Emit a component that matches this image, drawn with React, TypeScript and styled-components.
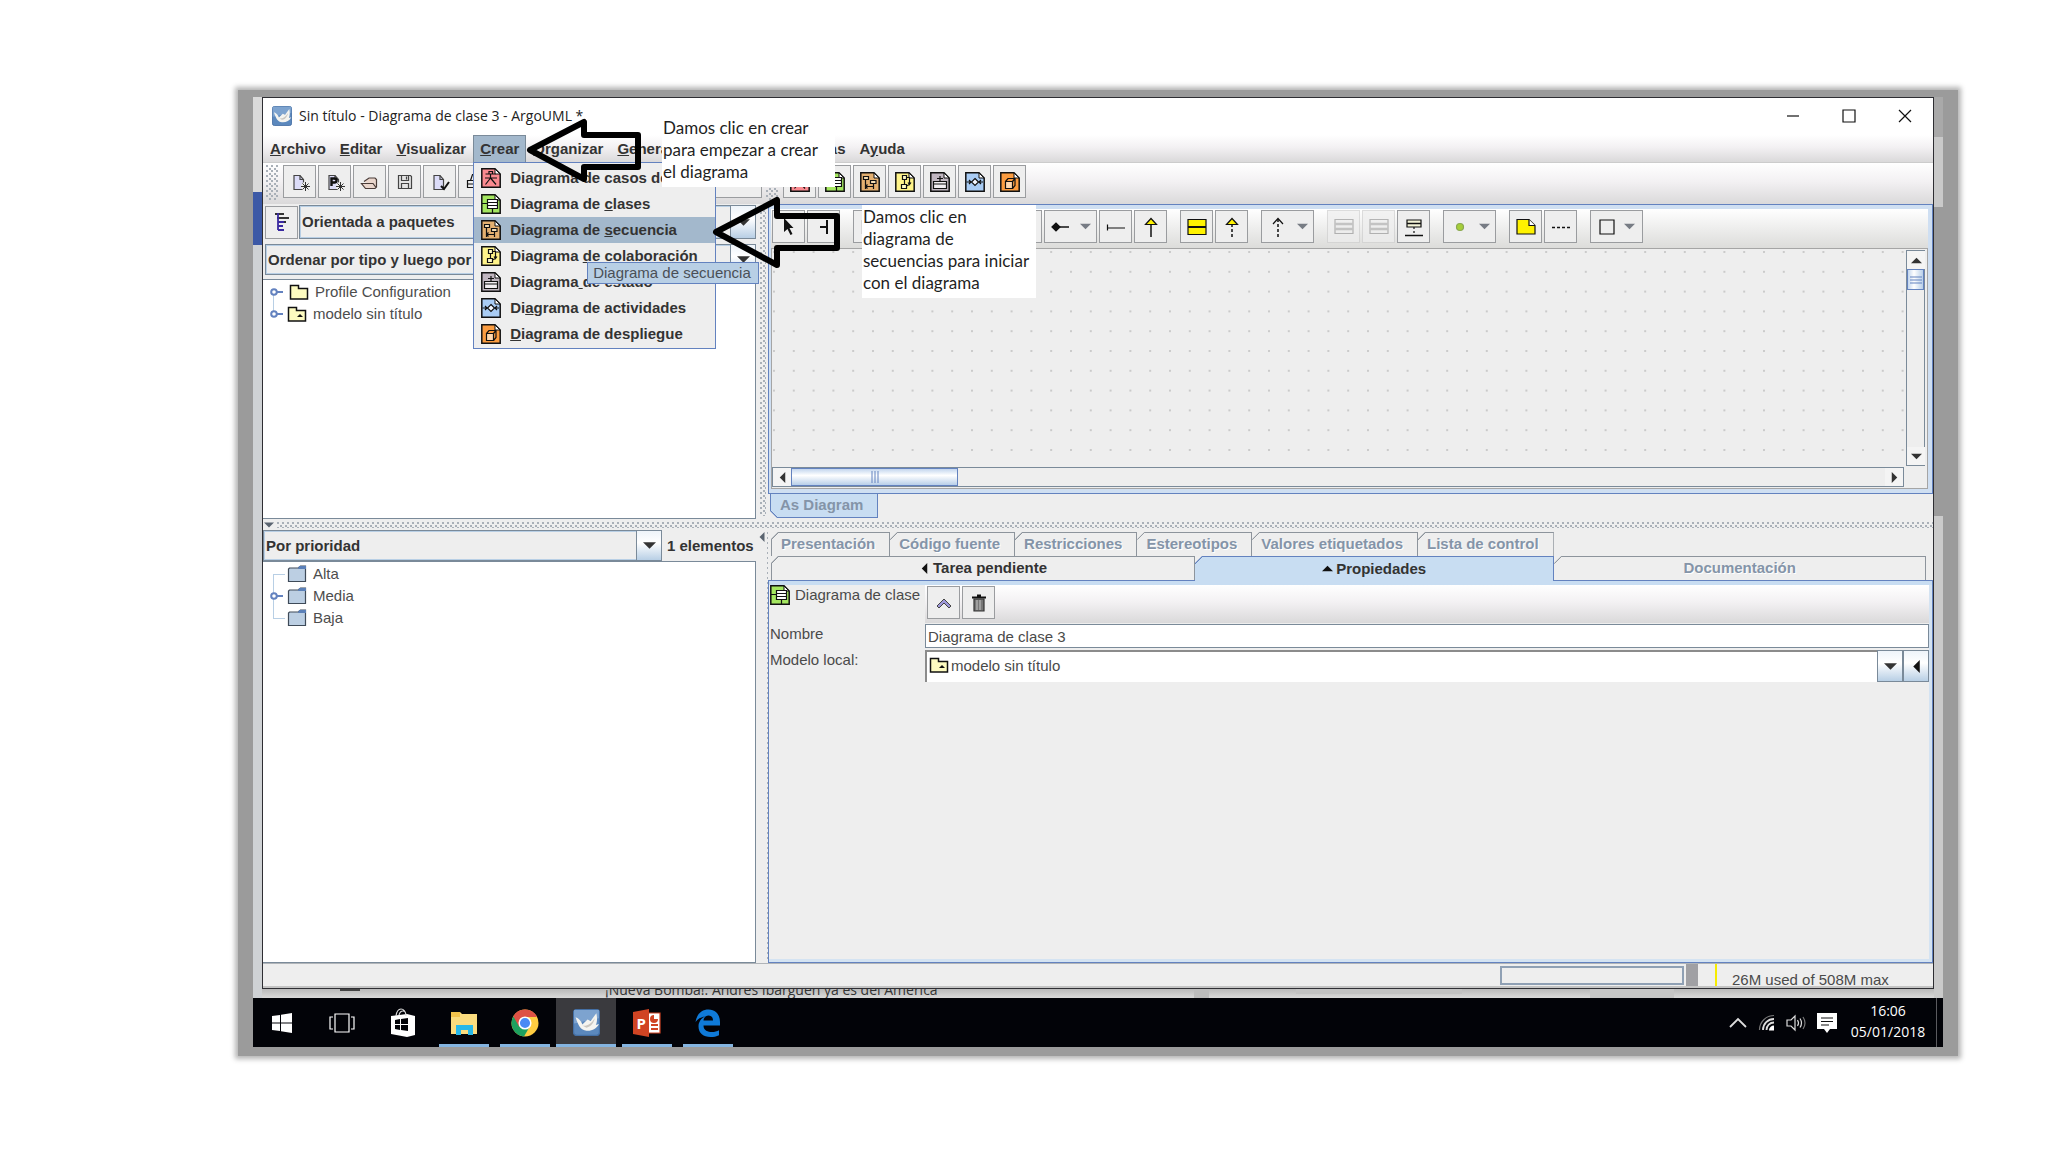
import React from 'react';
import styled, { createGlobalStyle, css } from 'styled-components';

const c = {
  line: '#7a8a99',
  blue: '#6382bf',
  pale: '#c8ddf2',
  menuSel: '#a3b8cc',
  face: '#eeeeee',
  text: '#333333',
  dim: '#8494a8',
};

const Global = createGlobalStyle`
  * { box-sizing: border-box; }
  body { margin: 0; background: #fff; }
  button, select, input { font: inherit; color: inherit; margin: 0; padding: 0; border: 0; background: none; border-radius: 0; outline: 0; }
  ul { list-style: none; margin: 0; padding: 0; }
  svg { display: block; flex: none; }
`;

/* ---------- outer picture frame and desktop ---------- */

const Page = styled.div`
  display: flex;
  height: 100vh;
  min-height: 800px;
  padding: 90px 90px 96px 238px;
  font: 15px/20px 'Liberation Sans', Arial, sans-serif;
  color: ${c.text};
`;
const Frame = styled.div`
  flex: 1;
  min-width: 0;
  display: flex;
  padding: 7px 15px 9px;
  background: #9b9b9b;
  box-shadow: 0 0 5px 3px #b4b4b4;
`;
const Screen = styled.div`
  position: relative;
  flex: 1;
  min-width: 0;
  display: flex;
  flex-direction: column;
`;
const Desktop = styled.div`
  flex: 1;
  min-height: 0;
  display: flex;
  flex-direction: column;
  padding: 0 9px;
  background:
    linear-gradient(#dadada 95px, #3c59a6 95px, #3c59a6 148px, #cfd2d5 148px) left / 9px 100% no-repeat,
    linear-gradient(#a9a9a9 40px, #c9c9c9 40px, #c9c9c9 110px, #9b9b9b 110px, #9b9b9b 419px, #cacaca 419px) right / 9px 100% no-repeat,
    #d3d3d3;
`;
const Behind = styled.div`
  height: 9px;
  overflow: hidden;
  display: flex;
  align-items: flex-end;
  padding-left: 343px;
  font: 14px/16px 'Open Sans', sans-serif;
  color: #333;
  background:
    linear-gradient(#444, #444) 78px 0 / 20px 2px no-repeat,
    linear-gradient(#bcbcbc, #bcbcbc) 932px 0 / 15px 100% no-repeat,
    linear-gradient(#c2c2c2, #c2c2c2) 1034px 0 / 166px 5px no-repeat,
    linear-gradient(#c6c6c6, #c6c6c6) 1328px 0 / 84px 100% no-repeat,
    linear-gradient(#b9b9b9, #dadada);
  white-space: nowrap;
`;

/* ---------- application window ---------- */

const Window = styled.div`
  flex: 1;
  min-height: 0;
  display: flex;
  flex-direction: column;
  border: 1px solid #2e2e33;
  background: ${c.face};
`;
const TitleBar = styled.header`
  height: 37px;
  display: flex;
  align-items: center;
  padding: 0 0 2px 9px;
  background: #fff;
  font: 14px/20px 'Open Sans', sans-serif;
  color: #222;
`;
const Title = styled.h1`
  flex: 1;
  margin: 0 0 0 7px;
  font: inherit;
`;
const WinButton = styled.button`
  width: 56px;
  height: 36px;
  display: flex;
  align-items: center;
  justify-content: center;
`;
const barGradient = css`background: linear-gradient(#ffffff, #f3f1f3 45%, #dad9da);`;
const MenuBar = styled.nav`
  height: 28px;
  display: flex;
  align-items: stretch;
  ${barGradient}
  border-bottom: 1px solid #cccccc;
  font-weight: bold;
`;
const MenuSlot = styled.div`position: relative; display: flex;`;
const MenuButton = styled.button<{ $open?: boolean }>`
  border: ${p => (p.$open ? `1px solid ${c.line}` : '0')};
  border-bottom: 0;
  padding: 0 ${p => (p.$open ? 6 : 7)}px;
  background: ${p => (p.$open ? c.menuSel : 'none')};
  font-weight: bold;
`;
const Menu = styled.ul`
  position: absolute;
  z-index: 5;
  left: 0;
  top: 100%;
  width: 243px;
  padding: 2px 0 1px;
  border: 1px solid ${c.blue};
  background: ${c.face};
`;
const MenuRow = styled.li`position: relative;`;
const MenuItem = styled.button<{ $on?: boolean }>`
  width: 100%;
  height: 26px;
  display: flex;
  align-items: center;
  gap: 9px;
  padding-left: 7px;
  font-weight: bold;
  white-space: nowrap;
  background: ${p => (p.$on ? c.menuSel : 'none')};
`;
const Tip = styled.div`
  position: absolute;
  z-index: 6;
  left: 113px;
  top: 45px;
  height: 22px;
  width: 172px;
  padding: 0 5px;
  line-height: 20px;
  border: 1px solid ${c.blue};
  background: #b8cfe5;
  font-weight: normal;
  white-space: nowrap;
  color: #4a4f57;
`;

const Toolbar = styled.div<{ $h: number }>`
  height: ${p => p.$h}px;
  display: flex;
  align-items: flex-start;
  gap: 4px;
  padding: 2px 3px;
  ${barGradient}
`;
const ToolGroup = styled.div`display: flex; gap: 2px;`;
const Tool = styled.button<{ $wide?: boolean; $off?: boolean }>`
  width: ${p => (p.$wide ? 53 : 33)}px;
  height: 33px;
  display: flex;
  align-items: center;
  justify-content: center;
  gap: 9px;
  border: 1px solid ${p => (p.$off ? '#cfcfcf' : '#9a9c9f')};
  background: ${c.face};
  opacity: ${p => (p.$off ? 0.7 : 1)};
`;
const dots = css`
  background-image: radial-gradient(circle at 1px 1px, #a9b0b8 1px, transparent 1px), radial-gradient(circle at 1px 1px, #a9b0b8 1px, transparent 1px);
  background-size: 5px 5px;
  background-position: 0 0, 3px 3px;
`;
const Grip = styled.div`width: 13px; height: 35px; ${dots}`;

/* ---------- split panes ---------- */

const Panes = styled.main`
  flex: 1;
  min-height: 0;
  display: grid;
  grid-template-columns: 494fr 11px 1165fr;
  grid-template-rows: 315fr 11px 433fr;
`;
const Pane = styled.section`
  min-width: 0;
  min-height: 0;
  display: flex;
  flex-direction: column;
`;
const VSplit = styled.div`
  display: flex;
  justify-content: center;
  padding: 3px 1px;
  &::after { content: ''; width: 6px; height: 100%; ${dots} }
`;
const VSplitArrow = styled(VSplit)`
  justify-content: flex-start;
  padding: 2px 0;
`;
const HSplit = styled.div`
  grid-column: 1 / -1;
  display: flex;
  align-items: center;
  gap: 3px;
  padding-left: 1px;
  &::after { content: ''; flex: 1; height: 6px; ${dots} }
`;

const Row = styled.div<{ $pad?: string }>`
  display: flex;
  align-items: center;
  gap: 1px;
  padding: ${p => p.$pad || '0'};
`;
const ComboBox = styled.div<{ $h: number }>`
  flex: 1;
  min-width: 0;
  height: ${p => p.$h}px;
  display: flex;
  border: 1px solid ${c.line};
  background: ${c.face};
  box-shadow: inset 0 0 0 1px #b8cfe5;
`;
const Select = styled.select`
  flex: 1;
  min-width: 0;
  appearance: none;
  padding: 0 2px;
  font-weight: bold;
`;
const ArrowFace = styled.span`
  width: 25px;
  display: flex;
  align-items: center;
  justify-content: center;
  border-left: 1px solid ${c.line};
  background: linear-gradient(#eef4fa, #ffffff 40%, #b8cfe5);
`;
const Tree = styled.ul<{ $top: number }>`
  flex: 1;
  min-height: 0;
  margin: ${p => p.$top}px 1px 0 0;
  padding: 1px 0 0 6px;
  border: 1px solid ${c.line};
  border-left: 0;
  background: #fff;
`;
const TreeRow = styled.li`
  height: 22px;
  display: flex;
  align-items: center;
`;
const TreeLabel = styled.button<{ $in?: boolean }>`
  display: flex;
  align-items: center;
  gap: 6px;
  padding-left: ${p => (p.$in ? 2 : 0)}px;
  color: #4d4d4d;
`;
const Count = styled.span`
  width: 94px;
  padding-left: 4px;
  font-weight: bold;
`;

/* ---------- diagram editor ---------- */

const Editor = styled.div`
  flex: 1;
  min-height: 0;
  display: flex;
  flex-direction: column;
  border: 1px solid ${c.blue};
  box-shadow: inset 0 0 0 4px #cfdff2;
  padding: 4px 4px 4px 2px;
`;
const DrawBar = styled.div`
  height: 39px;
  display: flex;
  align-items: flex-start;
  gap: 13px;
  padding: 1px;
  background: linear-gradient(#ffffff, #dcdcda);
`;
const Scroll = styled.div`
  flex: 1;
  min-height: 0;
  display: grid;
  grid-template-columns: 1fr 19px;
  grid-template-rows: 1fr 20px;
  gap: 1px 2px;
  padding: 1px 2px 1px 0;
  border: 1px solid #a5a5a5;
  background: ${c.face};
`;
const Canvas = styled.div`overflow: hidden; min-height: 0;`;
const Track = styled.div<{ $v?: boolean }>`
  display: flex;
  flex-direction: ${p => (p.$v ? 'column' : 'row')};
  border: 1px solid ${c.line};
  background: ${c.face};
  min-height: 0;
`;
const TrackEnd = styled.button`
  width: 18px;
  height: 18px;
  display: flex;
  align-items: center;
  justify-content: center;
  background: #f4f4f4;
`;
const Thumb = styled.div<{ $v?: boolean }>`
  width: ${p => (p.$v ? 'auto' : '167px')};
  height: ${p => (p.$v ? '21px' : 'auto')};
  display: flex;
  align-items: center;
  justify-content: center;
  border: 1px solid ${c.blue};
  background: linear-gradient(${p => (p.$v ? '90deg, ' : '')}#c3d6ee, #ffffff 40%, #b8cfe9);
`;
const Fill = styled.div`flex: 1;`;
const ViewTabs = styled.div`
  height: 25px;
  padding-left: 2px;
  display: flex;
  align-items: flex-start;
`;
const ViewTab = styled.button`
  height: 24px;
  padding: 0 14px 2px 9px;
  border: 1px solid ${c.blue};
  border-top: 0;
  font-weight: bold;
  color: ${c.dim};
  clip-path: polygon(0 0, 100% 0, 100% 100%, 7px 100%, 0 calc(100% - 7px));
  background: linear-gradient(45deg, ${c.blue} 6px, ${c.pale} 6px) border-box;
`;

/* ---------- details panel ---------- */

const TabArea = styled.div`padding: 2px 7px 0 3px;`;
const Tabs = styled.div`
  display: flex;
  height: 24px;
`;
const Tab = styled.button<{ $on?: boolean; $live?: boolean; $grow?: number }>`
  flex: ${p => (p.$grow ? `${p.$grow} 1 0` : 'none')};
  min-width: 0;
  height: ${p => (p.$on ? 25 : 24)}px;
  padding: 0 ${p => (p.$grow ? 9 : 14)}px 1px 9px;
  display: flex;
  align-items: center;
  justify-content: center;
  gap: 3px;
  border: 1px solid ${p => (p.$on ? c.blue : '#8d949c')};
  border-bottom: 0;
  font-weight: bold;
  line-height: 22px;
  white-space: nowrap;
  color: ${p => (p.$live ? c.text : c.dim)};
  text-shadow: ${p => (p.$live ? 'none' : '1px 1px #fff')};
  clip-path: polygon(7px 0, 100% 0, 100% 100%, 0 100%, 0 7px);
  background: linear-gradient(135deg, ${p => (p.$on ? c.blue : '#8d949c')} 6px, ${p => (p.$on ? c.pale : c.face)} 6px) border-box;
  & + & { border-left-width: 0; }
`;
const Details = styled.form`
  flex: 1;
  min-height: 0;
  display: grid;
  grid-template-columns: 155px 1fr;
  grid-template-rows: 38px 25px 32px 1fr;
  row-gap: 1px;
  padding: 4px 3px 4px 1px;
  border: 1px solid ${c.blue};
  box-shadow: inset 0 4px ${c.pale}, inset -3px 0 #d4e3f2, inset 0 -3px #d4e3f2;
`;
const Label = styled.label`
  display: flex;
  align-items: flex-start;
  gap: 5px;
  color: #4a4a4a;
  white-space: nowrap;
`;
const ActionBar = styled.div`
  display: flex;
  gap: 2px;
  padding: 1px 2px;
  ${barGradient}
`;
const TextInput = styled.input`
  min-width: 0;
  height: 24px;
  padding: 0 2px;
  border: 1px solid ${c.line};
  background: #fff;
  color: #4a4a4a;
`;
const ModelField = styled.div`
  display: flex;
  align-items: stretch;
  border-top: 2px solid #8b8b8b;
  border-left: 2px solid #8b8b8b;
  background: #fff;
`;
const ModelSelect = styled(Select)`
  padding: 0 2px 2px;
  font-weight: normal;
  color: #4a4a4a;
`;
const ModelIcon = styled.span`padding: 4px 0 0 2px;`;
const FieldArrow = styled.button`
  width: 26px;
  margin-top: -2px;
  display: flex;
  align-items: center;
  justify-content: center;
  border: 1px solid ${c.line};
  background: linear-gradient(#eef4fa, #ffffff 40%, #b8cfe5);
`;

const StatusBar = styled.footer`
  height: 25px;
  display: flex;
  align-items: stretch;
  border-top: 1px solid #b0b4b8;
  border-bottom: 2px solid #c4c4c4;
`;
const Progress = styled.div`
  width: 184px;
  margin: 2px 2px 1px 0;
  border: 2px solid #8fa0b4;
`;
const Divider = styled.div`width: 12px; background: #a0a0a4;`;
const Memory = styled.div`
  width: 218px;
  margin-left: 17px;
  padding: 6px 0 0 15px;
  border-left: 2px solid #f6ec00;
  line-height: 20px;
  white-space: nowrap;
  color: #4a4a4a;
`;

/* ---------- taskbar ---------- */

const Taskbar = styled.div`
  height: 49px;
  display: flex;
  align-items: stretch;
  gap: 1px;
  background: #020308;
  color: #fff;
`;
const Task = styled.button<{ $run?: boolean; $active?: boolean; $first?: boolean }>`
  width: ${p => (p.$first ? 58 : 60)}px;
  display: flex;
  align-items: center;
  justify-content: center;
  background:
    linear-gradient(#84b4e0, #84b4e0) bottom / ${p => (p.$run ? (p.$active ? '60px 3px' : '50px 3px') : '0 0')} no-repeat,
    ${p => (p.$active ? '#3a3a3e' : 'transparent')};
`;
const Tray = styled.div`
  margin-left: auto;
  display: flex;
  align-items: center;
  gap: 11px;
`;
const Clock = styled.time`
  width: 76px;
  margin-left: 2px;
  padding-bottom: 3px;
  text-align: center;
  font: 14px/21px 'Open Sans', sans-serif;
`;
const ShowDesktop = styled.button`
  width: 7px;
  height: 49px;
  margin-left: -1px;
  border-left: 1px solid #5a5a5e;
`;

/* ---------- tutorial annotations ---------- */

const Note = styled.p<{ $x: number; $y: number; $w: number }>`
  position: absolute;
  z-index: 8;
  left: ${p => p.$x}px;
  top: ${p => p.$y}px;
  width: ${p => p.$w}px;
  margin: 0;
  padding: 1px 0 4px 1px;
  background: #fff;
  color: #1f1f1f;
  font: 17px/22px Lato, sans-serif;
  white-space: pre-line;
`;
const Pointer = styled.svg<{ $x: number; $y: number }>`
  position: absolute;
  z-index: 7;
  left: ${p => p.$x}px;
  top: ${p => p.$y}px;
  pointer-events: none;
`;

/* ---------- icons ---------- */

const S = (p: { w?: number; h?: number; vb?: string; children: React.ReactNode }) => (
  <svg width={p.w ?? 20} height={p.h ?? 20} viewBox={p.vb ?? `0 0 ${p.w ?? 20} ${p.h ?? 20}`} fill="none" stroke="#111" strokeWidth="1.2" aria-hidden="true">
    {p.children}
  </svg>
);

type Kind = 'use' | 'cls' | 'seq' | 'col' | 'sta' | 'act' | 'dep';
const paper: Record<Kind, string> = {
  use: '#fa8a90', cls: '#a4e660', seq: '#e4b070', col: '#fff48a', sta: '#c0b6c0', act: '#a9ccf4', dep: '#fb9c40',
};
const inner: Record<Kind, React.ReactNode> = {
  use: <path d="M4.500 6h10M9.500 6v4M4 10h12M9.500 10l-5 6.500M9.500 10l5.500 6.500M8 3.500h3.500V6H8z" />,
  cls: <><path d="M6.500 5.500h10v9h-10z" fill="#fff" /><path d="M6.500 8.500h10M6.500 11.500h10M1 9.500h5.500M11.500 14.500V19" /></>,
  seq: <><path d="M3.500 4.500h5v3h-5z" fill="#f6deb4" /><path d="M10.500 8.500h5.500v3h-5.500z" fill="#f6deb4" /><path d="M5.500 7.500V17M13.500 11.500V17M5.500 14.500h8M7.500 12.500l-2 2 2 2" /></>,
  col: <><path d="M7.500 3.500h4v4h-4zM6.500 12.500h5v4h-5z" fill="#fffcc8" /><path d="M9.500 7.500v5M11.500 5.500h3v7l-3 1.500M13 10.500l1.500 2 1.500-2" /></>,
  sta: <><path d="M3.500 9.500h13v7h-13z" fill="#f3eff3" /><path d="M3.500 12h13M10 4v5.500M7 6.500h6" /></>,
  act: <><path d="M10 6.500l3.500 3.500-3.500 3.500L6.500 10z" fill="#f4f8ff" /><path d="M1.500 10h5M13.500 10H18M4 8l2 2-2 2M16 8l-2 2 2 2" /></>,
  dep: <><path d="M5.500 9.500h7v7h-7z" fill="#ffd9b0" /><path d="M5.500 9.500l2.500-3h7v7l-2.500 3M12.500 9.500l2.500-3" /></>,
};
const DiagramIcon = ({ kind }: { kind: Kind }) => (
  <S>
    <path d="M0.800 0.800h13.200l5.200 5.200v13.200H0.800z" fill={paper[kind]} strokeWidth="1.500" />
    <path d="M14 1v5h5z" fill="#fff" strokeWidth="1" />
    {inner[kind]}
  </S>
);

const Tri = ({ d = 'down', fill = '#333', s = 11 }: { d?: 'down' | 'up' | 'left' | 'right'; fill?: string; s?: number }) => {
  const pts = { down: '0,3 12,3 6,9', up: '0,9 12,9 6,3', left: '9,0 9,12 3,6', right: '3,0 3,12 9,6' }[d];
  return <svg width={s} height={s} viewBox="0 0 12 12" aria-hidden="true"><polygon points={pts} fill={fill} /></svg>;
};

const PageShape = ({ children }: { children?: React.ReactNode }) => (
  <S>
    <path d="M4 3.500h6l3.500 4v10H4z" fill="#dcdcf8" stroke="#444" /><path d="M10 3.500v4h3.500" stroke="#444" />{children}
  </S>
);
const spark = <><circle cx="15.500" cy="14.500" r="4.500" fill="#eee" stroke="none" /><path d="M15.500 10v9M11 14.500h9M12.500 11.500l6 6M18.500 11.500l-6 6" strokeWidth="1" stroke="#333" /></>;
const NewIcon = () => <PageShape>{spark}</PageShape>;
const NewProfileIcon = () => <PageShape><path d="M6.500 14V6.500h3q2 0 2 2t-2 2h-3" strokeWidth="2.400" />{spark}</PageShape>;
const OpenIcon = () => <S><path d="M4 9.500l5-3.500h6l1.500 1.500V15l-1.500 1.500H5.500l-4-5h11.500l3 4" fill="#ead6cc" stroke="#4a3c38" /></S>;
const SaveIcon = () => <S><path d="M3.500 3.500h12l1 1v12h-13z" fill="#e4e4e4" stroke="#444" /><path d="M6.500 3.500v5h7v-5M6.500 16.500v-5h7v5M11.500 4.500v3" stroke="#444" /></S>;
const ImportIcon = () => <PageShape><path d="M11 14l3 3 5-7" strokeWidth="2" /></PageShape>;
const PrintIcon = () => <S><path d="M5.500 8.500l2-6h8l-2 6M2.500 8.500h14v7h-14zM2.500 12h14" /></S>;
const OrderIcon = () => (
  <S w={16} h={20}><path d="M1 2h9M3 6h12M4 10h8" stroke="#333" strokeWidth="2" /><path d="M4 1v17M4 14h5M4 18h6M4 10h6" stroke="#3a2aa0" strokeWidth="1.800" /></S>
);
const YellowFolder = ({ model }: { model?: boolean }) => (
  <S w={20} h={18}>
    <path d="M1.500 16V2.500h8v3h9V16z" fill="#fdfbc0" stroke="#111" strokeWidth="1.500" />
    {model && <path d="M10 12h6l-3-3z" fill="#111" stroke="none" />}
  </S>
);
const BlueFolder = () => (
  <S w={20} h={18}>
    <path d="M1.500 16.500V4l1-1h9l2-2h5v15.500z" fill="#bccfe3" stroke="#3e4a58" />
    <path d="M12 1h7v3h-8z" fill="#5b80b8" stroke="none" />
  </S>
);
const Handle = ({ kind = 'node', up, down }: { kind?: 'node' | 'leaf'; up?: boolean; down?: boolean }) => (
  <S w={18} h={22}>
    {up && <path d="M4.500 0v11" stroke="#b8cfe5" strokeWidth="1" />}
    {down && <path d="M4.500 11v11" stroke="#b8cfe5" strokeWidth="1" />}
    {kind === 'leaf' ? <path d="M4 11.500h12" stroke="#b8cfe5" strokeWidth="1" /> : (
      <><circle cx="5" cy="11" r="2.800" fill="#fff" stroke={c.blue} strokeWidth="2" /><path d="M8 11h6" stroke={c.blue} strokeWidth="2" /></>
    )}
  </S>
);
const Shapes = {
  cursor: <S><path d="M5 1v14l3.500-3 3 6 2-1-3-6h4z" fill="#111" stroke="none" /></S>,
  broom: <S><path d="M13 3v14M6 10h7" strokeWidth="2" /></S>,
  block: <S><path d="M2.500 3.500h15v13h-15z" /></S>,
  comp: <S><path d="M8 10h10" strokeWidth="1.500" /><path d="M1 10l4-4 4 4-4 4z" fill="#111" /></S>,
  assoc: <S><path d="M1 11h18M1.500 7.500v6" /></S>,
  general: <S><path d="M10 7v13" strokeWidth="1.500" /><path d="M4.500 7.500L10 1.500l5.500 6z" fill="#fff200" /></S>,
  klass: <S><path d="M1 2.500h18v15H1z" fill="#fff200" /><path d="M1 10h18" strokeWidth="2" /></S>,
  realize: <S><path d="M10 7v13" strokeDasharray="3 2" strokeWidth="1.500" /><path d="M4.500 7.500L10 1.500l5.500 6z" fill="#fff200" /></S>,
  depend: <S><path d="M10 2v18" strokeDasharray="3 2" strokeWidth="1.500" /><path d="M5 7l5-5.500L15 7" /></S>,
  attr: <S><path d="M1 2.500h18v14H1z" stroke="#999" /><path d="M1 7h18M1 12h18" stroke="#b0b0b0" strokeWidth="2.500" /></S>,
  assocClass: <S><path d="M3 3h14v7H3z" fill="#f5f5d8" /><path d="M3 6.500h14M1 18.500h18" strokeWidth="1.500" /><path d="M10 10v8" strokeDasharray="2 2" /></S>,
  object: <S><circle cx="10" cy="10" r="3.500" fill="#a6ce39" stroke="#8aa850" /></S>,
  note: <S><path d="M1 2.500h12l6 6v8.500H1z" fill="#fff200" /><path d="M13 2.500v6h6" fill="#fff" /></S>,
  link: <S><path d="M1 10.500h18" strokeDasharray="3 2" strokeWidth="1.500" /></S>,
  rect: <S w={16} h={16}><path d="M1 1h14v14H1z" /></S>,
};
const Ship = ({ s }: { s: number }) => (
  <S w={s} h={s} vb="0 0 26 26">
    <rect x="0.500" y="0.500" width="25" height="25" rx="3" fill="#5b88bd" stroke="#446fa4" />
    <path d="M1 1h24v8L1 14z" fill="#7da3cf" stroke="none" />
    <path d="M2.500 8c3 1 5.500 3.500 6.500 7l5-5 3 1.500L22.500 4c1 5 .8 8.500-.5 11.500l3-1C23 19 18 21.500 13 21c-5.500-.5-8-5-10.500-13z" fill="#f4f4f0" stroke="none" />
    <path d="M9 16c4 1 8-1 12-7-1 4-3 8-8 9z" fill="#c9c6c0" stroke="none" />
  </S>
);

/* ---------- data ---------- */

const hot = (s: string) => {
  const i = s.indexOf('_');
  return i < 0 ? <>{s}</> : <span>{s.slice(0, i)}<u>{s[i + 1]}</u>{s.slice(i + 2)}</span>;
};
const diagrams: [Kind, string][] = [
  ['use', 'Diagrama de casos de _uso'],
  ['cls', 'Diagrama de _clases'],
  ['seq', 'Diagrama de _secuencia'],
  ['col', 'Diagrama _de colaboración'],
  ['sta', 'Diagrama_ de estado'],
  ['act', 'Di_agrama de actividades'],
  ['dep', '_Diagrama de despliegue'],
];

const Combo = ({ h, label, value }: { h: number; label: string; value: string }) => (
  <ComboBox $h={h}>
    <Select aria-label={label}><option>{value}</option></Select>
    <ArrowFace><Tri s={13} /></ArrowFace>
  </ComboBox>
);

const fileTools = [NewIcon, NewProfileIcon, OpenIcon, SaveIcon, ImportIcon, PrintIcon];
type ShapeName = keyof typeof Shapes;
type ToolSpec = [ShapeName, string?];
const drawTools: ToolSpec[][] = [
  [['cursor'], ['broom']],
  [['block', 'wide'], ['klass', 'wide']],
  [['assoc'], ['attr'], ['comp', 'wide'], ['assoc'], ['general']],
  [['klass'], ['realize']],
  [['depend', 'wide']],
  [['attr', 'off'], ['attr', 'off'], ['assocClass']],
  [['object', 'wide']],
  [['note'], ['link']],
  [['rect', 'wide']],
];
const DrawTool = ({ t }: { t: ToolSpec }) => (
  <Tool aria-label={t[0]} $wide={t[1] === 'wide'} $off={t[1] === 'off'}>
    {Shapes[t[0]]}
    {t[1] === 'wide' && <Tri fill="#777c84" />}
  </Tool>
);

export default function App() {
  return (
    <Page>
      <Global />
      <Frame>
        <Screen>
          <Desktop>
            <Window>
              <TitleBar>
                <Ship s={20} />
                <Title>Sin título - Diagrama de clase 3 - ArgoUML *</Title>
                <WinButton aria-label="Minimizar"><S w={14} h={14}><path d="M1 7h12" /></S></WinButton>
                <WinButton aria-label="Maximizar"><S w={14} h={14}><path d="M1 1h12v12H1z" /></S></WinButton>
                <WinButton aria-label="Cerrar"><S w={14} h={14}><path d="M1 1l12 12M13 1L1 13" /></S></WinButton>
              </TitleBar>

              <MenuBar>
                {['_Archivo', '_Editar', '_Visualizar'].map(m => <MenuButton key={m}>{hot(m)}</MenuButton>)}
                <MenuSlot>
                  <MenuButton $open>{hot('_Crear')}</MenuButton>
                  <Menu>
                    {diagrams.map(([k, name]) => (
                      <MenuRow key={k}>
                        <MenuItem $on={k === 'seq'}><DiagramIcon kind={k} />{hot(name)}</MenuItem>
                        {k === 'seq' && <Tip role="tooltip">Diagrama de secuencia</Tip>}
                      </MenuRow>
                    ))}
                  </Menu>
                </MenuSlot>
                {['_Organizar', '_Generar', 'Crí_tica', '_Herramientas', 'A_yuda'].map(m => <MenuButton key={m}>{hot(m)}</MenuButton>)}
              </MenuBar>

              <Toolbar $h={41}>
                <Grip />
                <ToolGroup>{fileTools.map((I, i) => <Tool key={i}><I /></Tool>)}</ToolGroup>
                <ToolGroup><Tool /><Tool /><Tool /></ToolGroup>
                <ToolGroup><Tool /><Tool /><Tool /></ToolGroup>
                <Tool $wide><Tri /></Tool>
                <Grip />
                <ToolGroup>{diagrams.map(([k]) => <Tool key={k} aria-label={k}><DiagramIcon kind={k} /></Tool>)}</ToolGroup>
              </Toolbar>

              <Panes>
                <Pane>
                  <Row $pad="1px 1px 0 2px">
                    <Tool aria-label="Perspectivas"><OrderIcon /></Tool>
                    <Combo h={34} label="Perspectiva" value="Orientada a paquetes" />
                  </Row>
                  <Row $pad="5px 1px 0 2px">
                    <Combo h={31} label="Orden" value="Ordenar por tipo y luego por nombre" />
                  </Row>
                  <Tree $top={4}>
                    <TreeRow><Handle down /><TreeLabel $in><YellowFolder />Profile Configuration</TreeLabel></TreeRow>
                    <TreeRow><Handle up /><TreeLabel><YellowFolder model />modelo sin título</TreeLabel></TreeRow>
                  </Tree>
                </Pane>
                <VSplit />
                <Pane>
                  <Editor>
                    <DrawBar>
                      {drawTools.map((g, i) => <ToolGroup key={i}>{g.map((t, j) => <DrawTool key={j} t={t} />)}</ToolGroup>)}
                    </DrawBar>
                    <Scroll>
                      <Canvas>
                        <svg width="100%" height="100%" aria-hidden="true">
                          <defs>
                            <pattern id="grid" width="19.800" height="19.800" patternUnits="userSpaceOnUse">
                              <rect x="1" y="1" width="2" height="2" fill="#cacaca" />
                            </pattern>
                          </defs>
                          <rect width="100%" height="100%" fill="url(#grid)" />
                        </svg>
                      </Canvas>
                      <Track $v>
                        <TrackEnd aria-label="Subir"><Tri d="up" /></TrackEnd>
                        <Thumb $v><S w={12} h={8}><path d="M0 1h12M0 4h12M0 7h12" stroke={c.blue} strokeWidth="1" /></S></Thumb>
                        <Fill />
                        <TrackEnd aria-label="Bajar"><Tri /></TrackEnd>
                      </Track>
                      <Track>
                        <TrackEnd aria-label="Izquierda"><Tri d="left" /></TrackEnd>
                        <Thumb><S w={8} h={12}><path d="M1 0v12M4 0v12M7 0v12" stroke={c.blue} strokeWidth="1" /></S></Thumb>
                        <Fill />
                        <TrackEnd aria-label="Derecha"><Tri d="right" /></TrackEnd>
                      </Track>
                    </Scroll>
                  </Editor>
                  <ViewTabs><ViewTab>As Diagram</ViewTab></ViewTabs>
                </Pane>

                <HSplit><Tri fill="#5a6470" s={10} /></HSplit>

                <Pane>
                  <Row>
                    <Combo h={31} label="Prioridad" value="Por prioridad" />
                    <Count>1 elementos</Count>
                  </Row>
                  <Tree $top={0}>
                    <TreeRow><Handle kind="leaf" down /><TreeLabel><BlueFolder />Alta</TreeLabel></TreeRow>
                    <TreeRow><Handle up down /><TreeLabel><BlueFolder />Media</TreeLabel></TreeRow>
                    <TreeRow><Handle kind="leaf" up /><TreeLabel><BlueFolder />Baja</TreeLabel></TreeRow>
                  </Tree>
                </Pane>
                <VSplitArrow><Tri d="left" fill="#5a6470" s={10} /></VSplitArrow>
                <Pane>
                  <TabArea>
                    <Tabs>
                      {['Presentación', 'Código fuente', 'Restricciones', 'Estereotipos', 'Valores etiquetados', 'Lista de control'].map(t => <Tab key={t}>{t}</Tab>)}
                    </Tabs>
                    <Tabs>
                      <Tab $grow={425} $live><Tri d="left" fill="#111" />Tarea pendiente</Tab>
                      <Tab $grow={358} $live $on><Tri d="up" fill="#111" />Propiedades</Tab>
                      <Tab $grow={371}>Documentación</Tab>
                    </Tabs>
                  </TabArea>
                  <Details onSubmit={e => e.preventDefault()}>
                    <Label as="div"><DiagramIcon kind="cls" />Diagrama de clase</Label>
                    <ActionBar>
                      <Tool type="button" aria-label="Subir"><S><path d="M3 13l7-7 7 7-2 2-5-5-5 5z" fill="#9d97d8" stroke="#444" strokeWidth="1" /></S></Tool>
                      <Tool type="button" aria-label="Eliminar"><S><path d="M5 6h10v12H5z" fill="#777" stroke="#333" /><path d="M3 4.500h14M8 2.500h4" strokeWidth="2" /><path d="M8 7v10M11 7v10" stroke="#bbb" /></S></Tool>
                    </ActionBar>
                    <Label htmlFor="nombre">Nombre</Label>
                    <TextInput id="nombre" defaultValue="Diagrama de clase 3" />
                    <Label htmlFor="modelo">Modelo local:</Label>
                    <ModelField>
                      <ModelIcon><YellowFolder model /></ModelIcon>
                      <ModelSelect id="modelo"><option>modelo sin título</option></ModelSelect>
                      <FieldArrow type="button" aria-label="Desplegar"><Tri s={13} /></FieldArrow>
                      <FieldArrow type="button" aria-label="Ir al modelo"><Tri d="left" fill="#111" s={13} /></FieldArrow>
                    </ModelField>
                  </Details>
                </Pane>
              </Panes>

              <StatusBar>
                <Fill />
                <Progress />
                <Divider />
                <Memory>26M used of 508M max</Memory>
              </StatusBar>
            </Window>
            <Behind>¡Nueva Bomba!: Andrés Ibargüen ya es del América</Behind>
          </Desktop>

          <Taskbar>
            <Task $first aria-label="Inicio"><S w={22} h={22}><path d="M1 4l8-1v7.500H1zM10 2.800L21 1v9.500H10zM1 11.500h8V19l-8-1zM10 11.500h11V21l-11-1.800z" fill="#fff" stroke="none" /></S></Task>
            <Task aria-label="Vista de tareas"><S w={26} h={20}><path d="M6 1h14v18H6zM4 4H1v12h3M22 4h3v12h-3" stroke="#fff" /></S></Task>
            <Task aria-label="Tienda">
              <S w={28} h={30}><path d="M2 8l16-2 8 2v19l-8 2-16-3z" fill="#fff" stroke="none" /><path d="M7 8q1-7 5-7 4 0 5 6M10 7q1-4 4-4 3 0 3 5" stroke="#ddd" /><path d="M6 12l5-1v5H6zM12 11l7-1v6h-7zM6 17h5v5l-5-1zM12 17h7v6l-7-1z" fill="#020308" stroke="none" /></S>
            </Task>
            <Task $run aria-label="Explorador">
              <S w={28} h={24}><path d="M1 1h9l2 2h15v20H1z" fill="#fbdc7e" stroke="none" /><path d="M1 1h9v5H1z" fill="#f3c34c" stroke="none" /><path d="M6 24V14h17v10h-5v-5h-7v5z" fill="#27b8e8" stroke="none" /></S>
            </Task>
            <Task $run aria-label="Chrome">
              <S w={28} h={28}>
                <circle cx="14" cy="14" r="13.500" fill="#ffcd41" stroke="none" />
                <path d="M14 14L2.300 7.200A13.500 13.500 0 0 0 13 27.500l5.500-9.500z" fill="#1da15f" stroke="none" />
                <path d="M14 14l-6 3.500L2.300 7.200A13.500 13.500 0 0 1 26 8H14z" fill="#de5145" stroke="none" />
                <circle cx="14" cy="14" r="5.800" fill="#4a8af4" stroke="#fff" strokeWidth="1.500" />
              </S>
            </Task>
            <Task $run $active aria-label="ArgoUML"><Ship s={27} /></Task>
            <Task $run aria-label="PowerPoint">
              <S w={28} h={28}>
                <path d="M14 4h13v20H14z" fill="#fff" stroke="#d04423" />
                <path d="M18 16h7M18 20h7" stroke="#d04423" strokeWidth="2" /><path d="M21 6v4h4a4 4 0 1 1-4-4z" fill="#d04423" stroke="none" />
                <path d="M0 3l16-3v28L0 25z" fill="#d04423" stroke="none" />
                <text x="3.500" y="20" fontFamily="Open Sans" fontWeight="700" fontSize="15" fill="#fff" stroke="none">P</text>
              </S>
            </Task>
            <Task $run aria-label="Edge">
              <S w={26} h={28}><path d="M0.500 13C2 4 7.500 0.500 13.500 0.500c8 0 11.500 6 11.500 12.500v3.500H8.500c0 5 4.500 6.500 8.500 6.500 2.500 0 5-.6 7-1.800v5C21.500 27.500 18.500 28 15.500 28 8.500 28 3.500 24 3.500 17.500c0-4.500 2.500-8 6.500-10C6 8 2.500 10 .5 13zM8.500 11.500h9.500c0-3-1.500-5-4.500-5s-5 2.500-5 5z" fill="#0f7ad8" fillRule="evenodd" stroke="none" /></S>
            </Task>
            <Tray>
              <S w={18} h={12}><path d="M1 10l8-8 8 8" stroke="#ddd" strokeWidth="1.800" /></S>
              <S w={17} h={17}><path d="M1.500 16A14.500 14.500 0 0 1 16 1.500" stroke="#777" /><path d="M5 16A11 11 0 0 1 16 5M8.500 16A7.500 7.500 0 0 1 16 8.500" stroke="#ddd" strokeWidth="1.800" /><path d="M11 16.500a5 5 0 0 1 5-5v5z" fill="#fff" stroke="none" /></S>
              <S w={20} h={18}><path d="M1 6h4l4-4v14l-4-4H1z" stroke="#ddd" /><path d="M11.500 6q2 3 0 6M14 4.500q3 4.500 0 9" stroke="#ddd" /><path d="M17 3q4 6 0 12" stroke="#777" /></S>
              <S w={20} h={20}><path d="M0 0h20v16h-7l-3 4-3-4H0z" fill="#fff" stroke="none" /><path d="M4 5h12M4 8.500h12M4 12h8" stroke="#111" /></S>
              <Clock>16:06<br />05/01/2018</Clock>
              <ShowDesktop aria-label="Mostrar escritorio" />
            </Tray>
          </Taskbar>

          <Pointer $x={272} $y={19} width="118" height="70" viewBox="0 0 118 70"><path d="M5 34L59 6V19H113V51H59V63Z" fill="none" stroke="#000" strokeWidth="6" strokeLinejoin="round" /></Pointer>
          <Pointer $x={458} $y={98} width="132" height="76" viewBox="0 0 132 76"><path d="M5 37L66 5V21H126V53H66V70Z" fill="none" stroke="#000" strokeWidth="6" strokeLinejoin="round" /></Pointer>
          <Note $x={409} $y={19} $w={173}>{'Damos clic en crear\npara empezar a crear\nel diagrama'}</Note>
          <Note $x={609} $y={108} $w={174}>{'Damos clic en\ndiagrama de\nsecuencias para iniciar\ncon el diagrama'}</Note>
        </Screen>
      </Frame>
    </Page>
  );
}
